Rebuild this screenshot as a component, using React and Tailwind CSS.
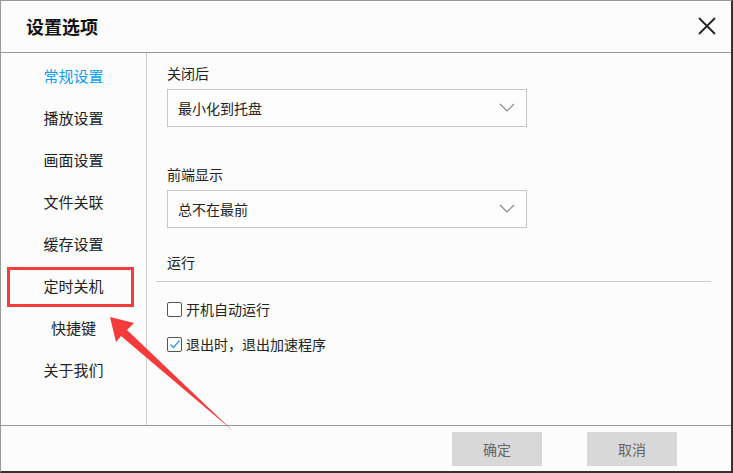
const menu = ["常规设置", "播放设置", "画面设置", "文件关联", "缓存设置", "定时关机", "快捷键", "关于我们"];

function Select({ value }) {
  return (
    <div className="w-[360px] h-[38px] border border-[#c8c8c8] bg-[#fdfdfd] flex items-center justify-between pl-[10px] pr-[11px]">
      <span className="text-[14px] text-[#222]">{value}</span>
      <svg width="16" height="9" viewBox="0 0 16 9" className="mb-[1px]">
        <path d="M1 1 L8 8 L15 1" fill="none" stroke="#8a8a8a" strokeWidth="1.2" />
      </svg>
    </div>
  );
}

function Checkbox({ checked, label }) {
  return (
    <div className="flex items-center h-[20px]">
      <span className="w-[15px] h-[15px] border border-[#555] rounded-[2px] flex items-center justify-center bg-white">
        {checked && (
          <svg width="12" height="12" viewBox="0 0 12 12">
            <path d="M1.5 6.5 L4.5 9.5 L10.5 2.5" fill="none" stroke="#2a9bf2" strokeWidth="1.3" />
          </svg>
        )}
      </span>
      <span className="ml-[4px] text-[14px] text-[#222]">{label}</span>
    </div>
  );
}

export default function App() {
  return (
    <div
      className="relative w-[733px] h-[473px] bg-[#fcfcfc] border-l border-t border-r-2 border-b-2 border-l-[#999] border-t-[#999] border-r-[#333] border-b-[#333] overflow-hidden"
      style={{ fontFamily: '"Noto Sans CJK SC", "Noto Sans", sans-serif' }}
    >
      {/* Title bar */}
      <div className="h-[52px] border-b border-[#999] flex items-center justify-between pl-[25px] pr-[14px]">
        <h1 className="text-[18px] font-bold text-[#111]">设置选项</h1>
        <svg width="18" height="18" viewBox="0 0 18 18" className="mr-[1px] -mt-[1px]">
          <path d="M1 1 L17 17 M17 1 L1 17" stroke="#222" strokeWidth="1.8" />
        </svg>
      </div>

      {/* Body */}
      <div className="h-[372px] flex">
        <div className="w-[146px] border-r border-[#ccc] pt-[2px]">
          {menu.map((item, i) => (
            <div
              key={item}
              className={`relative h-[42px] flex items-center justify-center text-[15px] ${
                i === 0 ? "text-[#0e9cf6]" : "text-[#222]"
              }`}
            >
              {item}
              {i === 5 && (
                <span className="absolute left-[6px] top-[2px] w-[127px] h-[40px] border-[3px] border-[#f53c3c]" />
              )}
            </div>
          ))}
        </div>

        <div className="flex-1 pl-[20px] pr-[20px] pt-[10px]">
          <div className="h-[20px] text-[14px] text-[#222] leading-[20px]">关闭后</div>
          <div className="mt-[6px]">
            <Select value="最小化到托盘" />
          </div>

          <div className="mt-[37px] h-[20px] text-[14px] text-[#222] leading-[20px]">前端显示</div>
          <div className="mt-[6px]">
            <Select value="总不在最前" />
          </div>

          <div className="mt-[24px] h-[20px] text-[14px] text-[#222] leading-[20px]">运行</div>
          <div className="mt-[9px] ml-[-11px] border-t border-[#ccc]" />

          <div className="mt-[17px]">
            <Checkbox label="开机自动运行" />
          </div>
          <div className="mt-[15px]">
            <Checkbox checked label="退出时，退出加速程序" />
          </div>
        </div>
      </div>

      {/* Footer */}
      <div className="h-[46px] border-t border-[#999] flex items-start justify-end pt-[6px] pr-[54px] gap-[45px]">
        <button className="w-[90px] h-[34px] bg-[#d8d8d8] text-[14px] text-[#666]">确定</button>
        <button className="w-[90px] h-[34px] bg-[#d8d8d8] text-[14px] text-[#666]">取消</button>
      </div>

      {/* Red annotation arrow */}
      <svg className="absolute left-0 top-0 pointer-events-none" width="733" height="473" viewBox="0 0 733 473">
        <polygon
          points="110,317 134,323 127,330 233,431 121,336 116,342"
          fill="#f43a3a"
          transform="translate(-1,-1)"
        />
      </svg>
    </div>
  );
}
